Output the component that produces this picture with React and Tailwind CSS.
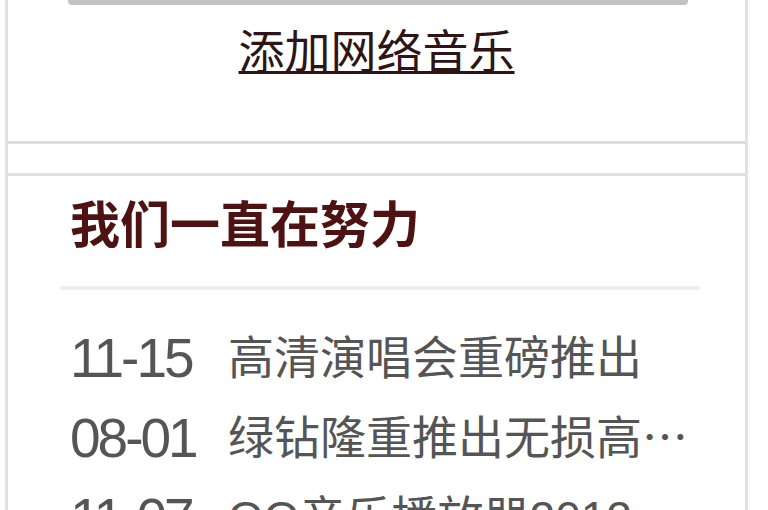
import React from "react";

const news = [
  { date: "11-15", title: "高清演唱会重磅推出" },
  { date: "08-01", title: "绿钻隆重推出无损高⋯" },
  { date: "11-07", title: "QQ音乐播放器2012" },
];

const font = { fontFamily: '"Liberation Sans", "Noto Sans CJK SC", sans-serif' };

const App = () => {
  return (
    <div className="w-[768px] h-[510px] overflow-hidden bg-white pl-[5px]" style={font}>
      <div className="w-[743px] h-[510px] border-x-[3px] border-[#e2e2e2]">
        {/* Add music box */}
        <div className="h-[144px] border-b-[3px] border-[#dddddd]">
          <div className="ml-[60px] w-[620px] h-[5px] bg-[#c2c2c2] rounded-b-sm"></div>
          <div className="mt-[22px] text-center text-[46px] leading-[50px] text-[#2e1414]">
            <a className="underline decoration-[3px] underline-offset-[3px]">添加网络音乐</a>
          </div>
        </div>

        {/* News box */}
        <div className="mt-[29px] border-t-[3px] border-[#e0e0e0]">
          <h3 className="mt-[25px] pl-[62px] text-[50px] leading-[50px] font-bold text-[#4e1212]">
            我们一直在努力
          </h3>
          <div className="ml-[52px] mt-[35px] w-[640px] h-[4px] bg-[#efefef]"></div>
          <ul className="mt-[28px] pl-[62px] text-[#555555]">
            {news.map((item) => (
              <li key={item.date} className="flex h-[80px] items-center text-[46px] leading-[80px]">
                <span className="w-[158px] shrink-0 text-[55px] tracking-[-3px]">{item.date}</span>
                <span className="whitespace-nowrap">{item.title}</span>
              </li>
            ))}
          </ul>
        </div>
      </div>
    </div>
  );
};

export default App;
